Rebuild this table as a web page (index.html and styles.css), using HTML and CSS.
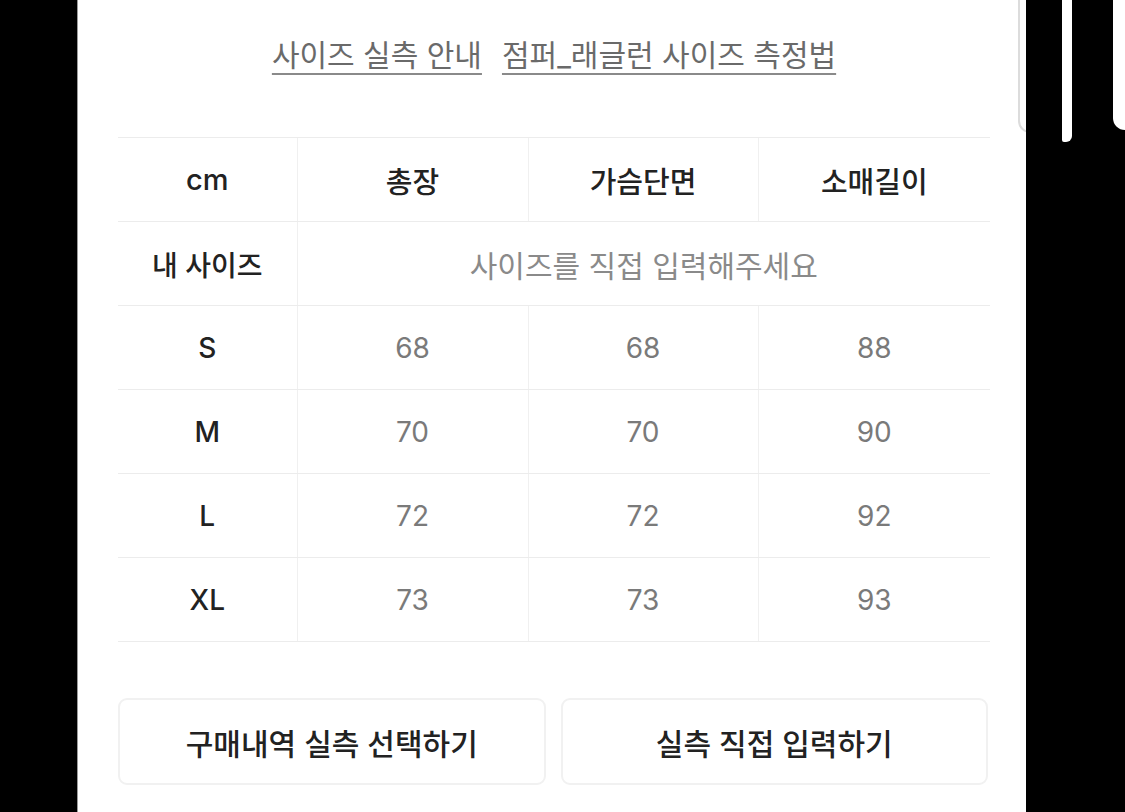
FILE: index.html
```html
<!DOCTYPE html>
<html lang="ko">
<head>
<meta charset="utf-8">
<link rel="stylesheet" href="styles.css">
</head>
<body>
<div class="panel">
  <div class="corner-edge"></div>
  <div class="links">
    <a class="link" href="#">사이즈 실측 안내</a>
    <a class="link" href="#">점퍼_래글런 사이즈 측정법</a>
  </div>
  <table class="size-table">
    <colgroup>
      <col class="c1"><col class="c2"><col class="c3"><col class="c4">
    </colgroup>
    <tr class="head">
      <th>cm</th><th>총장</th><th>가슴단면</th><th>소매길이</th>
    </tr>
    <tr>
      <th>내 사이즈</th><td colspan="3" class="placeholder">사이즈를 직접 입력해주세요</td>
    </tr>
    <tr><th>S</th><td>68</td><td>68</td><td>88</td></tr>
    <tr><th>M</th><td>70</td><td>70</td><td>90</td></tr>
    <tr><th>L</th><td>72</td><td>72</td><td>92</td></tr>
    <tr><th>XL</th><td>73</td><td>73</td><td>93</td></tr>
  </table>
  <div class="buttons">
    <button class="btn">구매내역 실측 선택하기</button>
    <button class="btn">실측 직접 입력하기</button>
  </div>
</div>
<div class="side">
  <div class="strip strip-a"></div>
  <div class="strip strip-b"></div>
</div>
</body>
</html>
```

FILE: styles.css
```css
html, body {
  margin: 0;
  padding: 0;
  background: #000;
  height: 812px;
  overflow: hidden;
}
body {
  display: flex;
  font-family: Inter, "Noto Sans CJK KR", sans-serif;
}
.panel {
  margin-left: 77px;
  width: 949px;
  height: 812px;
  background: #fff;
  border-left: 1px solid #9a9a9a;
  position: relative;
  overflow: hidden;
  box-sizing: border-box;
  padding: 35px 36px 0 40px;
}
.corner-edge {
  position: absolute;
  right: -20px;
  top: -10px;
  width: 28px;
  height: 143px;
  border: 2px solid #dcdcdc;
  border-radius: 0 0 0 12px;
  box-sizing: border-box;
}
.links {
  display: flex;
  justify-content: center;
  gap: 20px;
  height: 40px;
  line-height: 40px;
}
.link {
  font-size: 30px;
  color: #6a6a6a;
  text-decoration: underline;
  text-decoration-color: #8a8a8a;
  text-decoration-thickness: 2px;
  text-underline-offset: 7px;
}
.size-table {
  margin-top: 62px;
  width: 872px;
  border-collapse: collapse;
  table-layout: fixed;
}
.c1 { width: 179px; }
.c2 { width: 231px; }
.c3 { width: 230px; }
.c4 { width: 232px; }
.size-table th,
.size-table td {
  height: 83px;
  padding: 0;
  text-align: center;
  border-top: 1px solid #ececec;
  border-bottom: 1px solid #ececec;
  font-size: 28px;
}
.size-table th + th,
.size-table th + td,
.size-table td + td {
  border-left: 1px solid #f0f0f0;
}
.size-table th {
  color: #222;
  font-weight: 500;
}
.size-table td {
  color: #7a7a7a;
  font-weight: 400;
}
.size-table .head th {
  font-size: 29px;
}
.size-table td.placeholder {
  font-size: 30px;
  color: #8a8a8a;
}
.buttons {
  margin-top: 56px;
  display: flex;
  gap: 15px;
  width: 870px;
}
.btn {
  flex: 1;
  height: 87px;
  background: #fff;
  border: 2px solid #f1f1f1;
  border-radius: 9px;
  font-family: Inter, "Noto Sans CJK KR", sans-serif;
  font-size: 30px;
  font-weight: 500;
  color: #222;
  padding: 0;
}
.side {
  flex: 1;
  position: relative;
}
.strip {
  position: absolute;
  top: 0;
  background: #fff;
}
.strip-a {
  left: 36px;
  width: 10px;
  height: 142px;
  border-radius: 0 0 6px 2px;
}
.strip-b {
  right: 0;
  width: 12px;
  height: 130px;
  border-radius: 0 0 0 12px;
}
```
